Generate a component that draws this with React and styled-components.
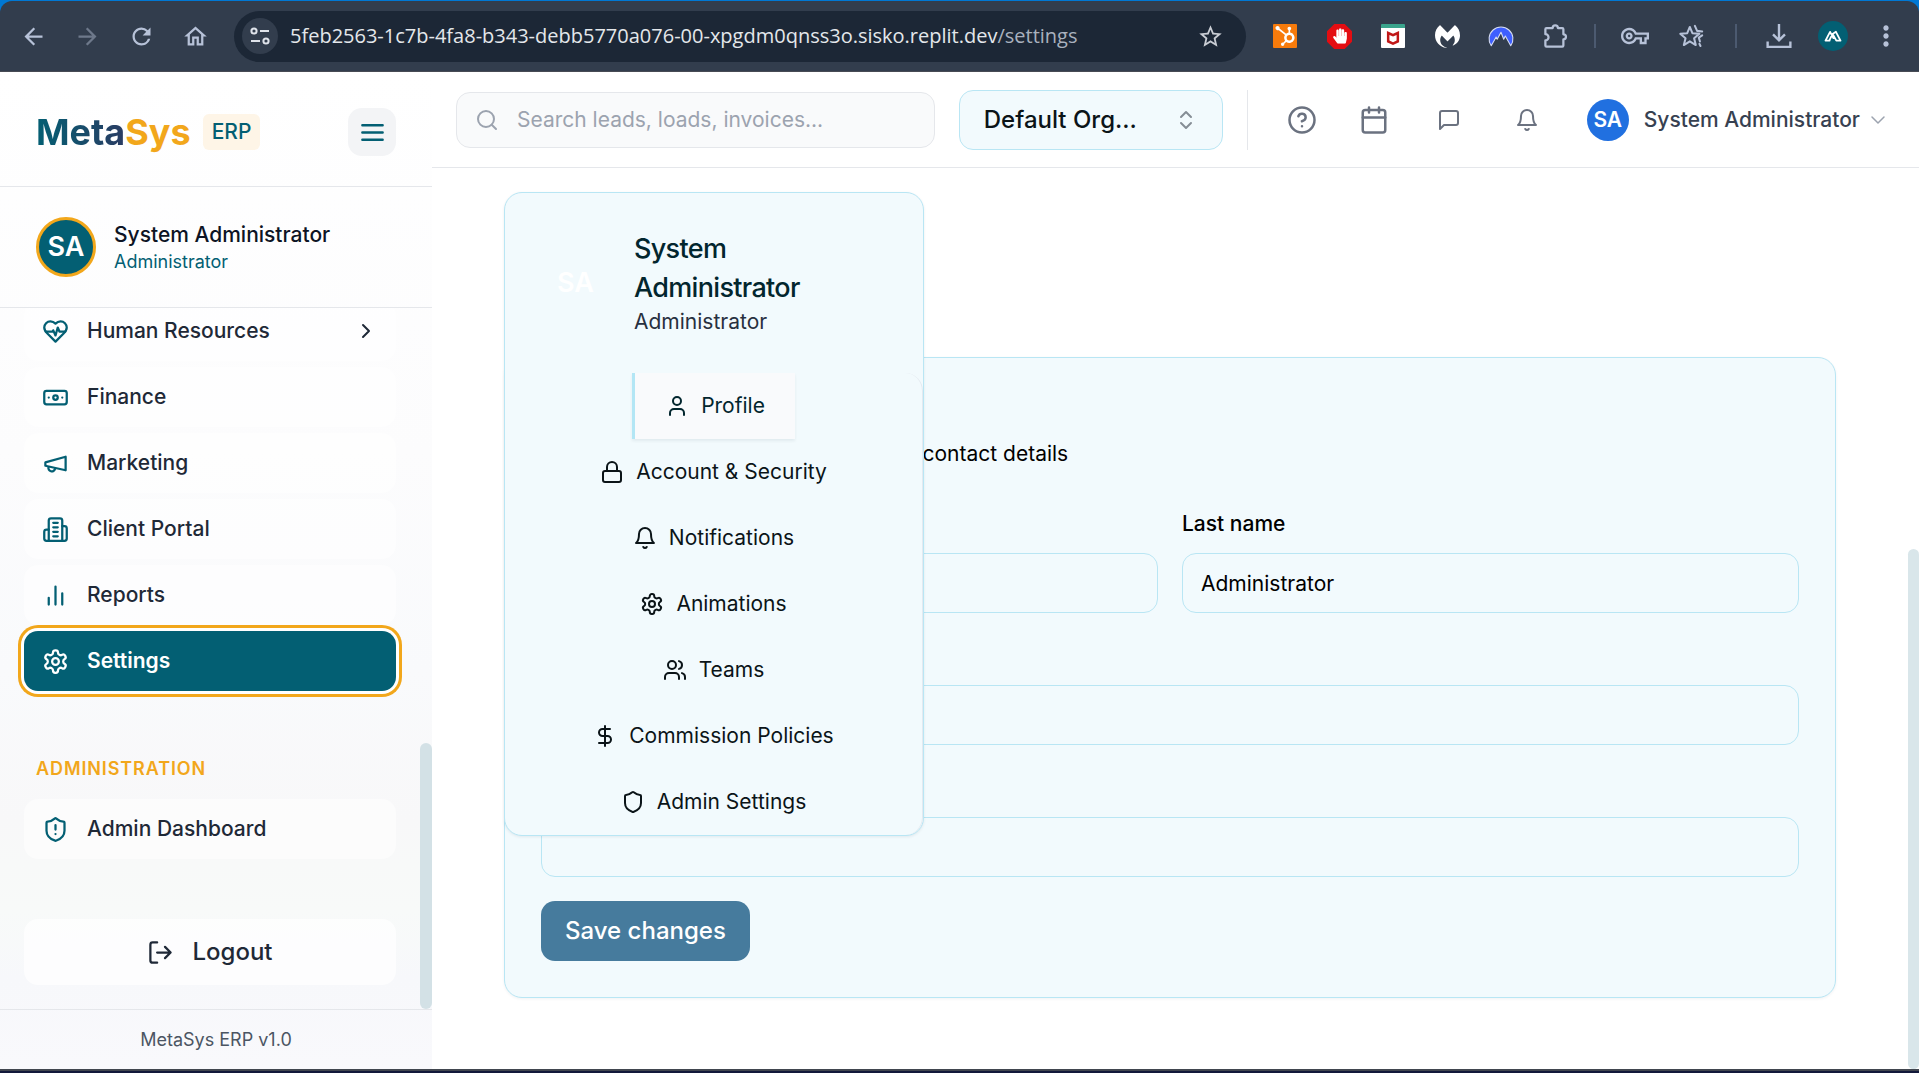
import React from "react";
import styled, { createGlobalStyle, css } from "styled-components";
import { SiHubspot, SiMcafee, SiMalwarebytes } from "react-icons/si";
import { FaHandPaper } from "react-icons/fa";
import {
  MdArrowBack, MdArrowForward, MdRefresh, MdOutlineHome, MdStarOutline,
  MdOutlineVpnKey, MdMoreVert,
} from "react-icons/md";

const teal = "#035f73";
const amber = "#f2a71b";
const line = "#e5e7eb";
const skyLine = "#b9e6f4";
const skyFill = "#f2fafd";

const Global = createGlobalStyle`
  *, *::before, *::after { box-sizing: border-box; }
  html, body, #root { height: 100%; }
  body { margin: 0; overflow: hidden; background: #fff; font-family: Inter, "Liberation Sans", sans-serif; font-size: 21px; line-height: 30px; color: #0b1418; }
  button, input { font: inherit; color: inherit; margin: 0; }
  button { border: 0; padding: 0; background: none; cursor: pointer; }
  a { color: inherit; text-decoration: none; }
  h1, h2, p, ul { margin: 0; padding: 0; font-weight: inherit; font-size: inherit; }
  ul { list-style: none; }
  svg { display: block; flex: none; }
`;

/* ---------- icons ---------- */
const Stroke = ({ size = 24, width = 2, children }) => (
  <svg width={size} height={size} viewBox="0 0 24 24" fill="none" stroke="currentColor"
    strokeWidth={width} strokeLinecap="round" strokeLinejoin="round" aria-hidden="true">{children}</svg>
);
const shapes = {
  heart: <><path d="M19 14c1.49-1.46 3-3.21 3-5.5A5.5 5.5 0 0 0 16.5 3c-1.76 0-3 .5-4.5 2-1.5-1.5-2.74-2-4.5-2A5.5 5.5 0 0 0 2 8.5c0 2.3 1.5 4.05 3 5.5l7 7Z" /><path d="M3.22 12H9.5l.5-1 2 4.5 2-7 1.5 3.5h5.27" /></>,
  banknote: <><rect x="2" y="6" width="20" height="12" rx="2" /><circle cx="12" cy="12" r="2" /><path d="M6 12h.01M18 12h.01" /></>,
  megaphone: <><path d="m3 11 18-5v12L3 14v-3z" /><path d="M11.6 16.8a3 3 0 1 1-5.8-1.6" /></>,
  building: <><path d="M6 22V4a2 2 0 0 1 2-2h8a2 2 0 0 1 2 2v18Z" /><path d="M6 12H4a2 2 0 0 0-2 2v6a2 2 0 0 0 2 2h2" /><path d="M18 9h2a2 2 0 0 1 2 2v9a2 2 0 0 1-2 2h-2" /><path d="M10 6h4M10 10h4M10 14h4M10 18h4" /></>,
  bars: <path d="M18 20V10M12 20V4M6 20v-6" />,
  gear: <><path d="M12.22 2h-.44a2 2 0 0 0-2 2v.18a2 2 0 0 1-1 1.73l-.43.25a2 2 0 0 1-2 0l-.15-.08a2 2 0 0 0-2.73.73l-.22.38a2 2 0 0 0 .73 2.73l.15.1a2 2 0 0 1 1 1.72v.51a2 2 0 0 1-1 1.74l-.15.09a2 2 0 0 0-.73 2.73l.22.38a2 2 0 0 0 2.73.73l.15-.08a2 2 0 0 1 2 0l.43.25a2 2 0 0 1 1 1.73V20a2 2 0 0 0 2 2h.44a2 2 0 0 0 2-2v-.18a2 2 0 0 1 1-1.73l.43-.25a2 2 0 0 1 2 0l.15.08a2 2 0 0 0 2.73-.73l.22-.39a2 2 0 0 0-.73-2.73l-.15-.08a2 2 0 0 1-1-1.74v-.5a2 2 0 0 1 1-1.74l.15-.09a2 2 0 0 0 .73-2.73l-.22-.38a2 2 0 0 0-2.73-.73l-.15.08a2 2 0 0 1-2 0l-.43-.25a2 2 0 0 1-1-1.73V4a2 2 0 0 0-2-2z" /><circle cx="12" cy="12" r="3" /></>,
  shield: <path d="M20 13c0 5-3.5 7.5-7.66 8.95a1 1 0 0 1-.67-.01C7.5 20.5 4 18 4 13V6a1 1 0 0 1 1-1c2 0 4.5-1.2 6.24-2.72a1.17 1.17 0 0 1 1.52 0C14.51 3.81 17 5 19 5a1 1 0 0 1 1 1z" />,
  alert: <path d="M12 8v4M12 16h.01" />,
  logout: <path d="M9 21H5a2 2 0 0 1-2-2V5a2 2 0 0 1 2-2h4M16 17l5-5-5-5M21 12H9" />,
  chevronRight: <path d="m9 18 6-6-6-6" />,
  chevronDown: <path d="m6 9 6 6 6-6" />,
  updown: <path d="m7 15 5 5 5-5M7 9l5-5 5 5" />,
  menu: <path d="M3 5.500h18M3 12h18M3 18.500h18" />,
  search: <><circle cx="11" cy="11" r="8" /><path d="m21 21-4.3-4.3" /></>,
  help: <><circle cx="12" cy="12" r="10" /><path d="M9.09 9a3 3 0 0 1 5.83 1c0 2-3 3-3 3M12 17h.01" /></>,
  calendar: <><path d="M8 2v4M16 2v4M3 10h18" /><rect x="3" y="4" width="18" height="18" rx="2" /></>,
  chat: <path d="M21 15a2 2 0 0 1-2 2H7l-4 4V5a2 2 0 0 1 2-2h14a2 2 0 0 1 2 2z" />,
  bell: <><path d="M6 8a6 6 0 0 1 12 0c0 7 3 9 3 9H3s3-2 3-9" /><path d="M10.3 21a1.94 1.94 0 0 0 3.4 0" /></>,
  user: <><path d="M19 21v-2a4 4 0 0 0-4-4H9a4 4 0 0 0-4 4v2" /><circle cx="12" cy="7" r="4" /></>,
  lock: <><rect x="3" y="11" width="18" height="11" rx="2" /><path d="M7 11V7a5 5 0 0 1 10 0v4" /></>,
  users: <><path d="M16 21v-2a4 4 0 0 0-4-4H6a4 4 0 0 0-4 4v2" /><circle cx="9" cy="7" r="4" /><path d="M22 21v-2a4 4 0 0 0-3-3.87M16 3.13a4 4 0 0 1 0 7.75" /></>,
  dollar: <path d="M12 2v20M17 5H9.5a3.5 3.5 0 0 0 0 7h5a3.5 3.5 0 0 1 0 7H6" />,
};
const Icon = ({ name, size, width }) => (
  <Stroke size={size} width={width}>{shapes[name]}{name === "shieldAlert" && <>{shapes.shield}{shapes.alert}</>}</Stroke>
);

/* ---------- browser bar ---------- */
const Window = styled.div`display: flex; flex-direction: column; height: 100vh;`;
const Frame = styled.div`flex: none; padding-top: 1px; background: #0078d4;`;
const Bar = styled.div`
  display: flex; align-items: center; height: 71px; padding: 0 7px 0 15px;
  background: #323d4d; color: #b7c2d8; border-bottom: 1px solid #474b54; border-radius: 12px 12px 0 0;
`;
const BarButton = styled.button`
  display: grid; place-items: center; flex: none; width: ${(p) => p.$w || 54}px; height: 36px;
  opacity: ${(p) => (p.$dim ? 0.45 : 1)};
`;
const NavButtons = styled.div`display: flex; margin-left: -9px; margin-right: 12px;`;
const Address = styled.div`
  display: flex; align-items: center; flex: 1; min-width: 0; height: 51px; padding: 0 22px 0 8px;
  border-radius: 26px; background: #1c2736; color: #c9cdd4;
`;
const SiteInfo = styled.button`
  display: grid; place-items: center; flex: none; width: 36px; height: 36px; border-radius: 50%;
  background: #323d4d; color: #dfe3ea; margin-right: 12px;
`;
const Url = styled.span`
  flex: 1; min-width: 0; overflow: hidden; white-space: nowrap; font-family: "Open Sans", "Noto Sans", sans-serif;
  font-size: 20px; color: #a9b1be;
  b { font-weight: 400; color: #e4e7eb; }
`;
const Extensions = styled.div`display: flex; align-items: center; margin-left: 12px;`;
const Rule = styled.span`width: 2px; height: 24px; margin: 0 ${(p) => p.$gap}px; background: #4c5a70;`;
const Tile = styled.span`
  display: grid; place-items: center; width: 24px; height: 24px; color: ${(p) => p.$fg}; background: ${(p) => p.$bg};
  border-radius: 1px; border-top: ${(p) => (p.$top ? `4px solid ${p.$top}` : "0")};
`;
const Profile = styled.span`
  display: grid; place-items: center; width: 30px; height: 30px; border-radius: 50%; background: ${teal}; color: #fff;
`;

/* ---------- shell ---------- */
const Shell = styled.div`display: flex; flex: 1; min-height: 0;`;
const Taskbar = styled.div`flex: none; height: 4px; background: #12183a; border-top: 2px solid #41464f;`;
const Side = styled.aside`
  display: flex; flex-direction: column; flex: none; width: 432px;
  background: linear-gradient(#fff 0%, #fcfcfd 38%, #f9fafc 60%, #f8f8f9 75%, #f8faf9 84%, #f7f8fb 91%, #f9f9fc 100%);
`;
const Brand = styled.div`
  display: flex; align-items: center; flex: none; height: 115px; padding: 6px 36px 0; border-bottom: 1px solid ${line};
`;
const Logo = styled.h1`
  font-size: 36px; line-height: 42px; font-weight: 700; color: ${amber};
  span { background: linear-gradient(90deg, ${teal}, #2a3c63); background-clip: text; -webkit-background-clip: text; color: transparent; }
`;
const Badge = styled.span`
  margin-left: 12px; padding: 3px 9px; border-radius: 6px; background: #fef5e7; color: ${teal}; font-size: 21px; font-weight: 500;
`;
const MenuButton = styled.button`
  display: grid; place-items: center; width: 48px; height: 48px; margin-left: auto; border-radius: 14px;
  background: #f3f4f6; color: ${teal};
`;
const Person = styled.div`
  display: flex; align-items: center; gap: 18px; flex: none; height: 121px; padding: 0 36px; border-bottom: 1px solid ${line};
`;
const Avatar = styled.span`
  display: grid; place-items: center; flex: none; width: ${(p) => p.$size}px; height: ${(p) => p.$size}px; border-radius: 50%;
  background: ${(p) => p.$bg}; border: ${(p) => (p.$ring ? `3px solid ${amber}` : "0")};
  color: #fff; font-size: ${(p) => p.$font}px; font-weight: 600;
`;
const PersonName = styled.p`font-weight: 500; color: #0d1424;`;
const PersonRole = styled.p`font-size: 18px; line-height: 24px; color: ${teal};`;
const SideScroll = styled.div`position: relative; flex: 1; min-height: 0; overflow: hidden; padding: 0 36px 0 24px; display: flex; flex-direction: column; justify-content: flex-end;`;
const Thumb = styled.span`
  position: absolute; right: 0; bottom: 0; width: ${(p) => p.$w}px; height: ${(p) => p.$h}px; border-radius: 6px; background: ${(p) => p.$c};
`;
const NavList = styled.ul`display: flex; flex-direction: column; gap: 6px;`;
const NavLink = styled.a`
  display: flex; align-items: center; gap: 18px; flex: none; height: 60px; padding: 0 18px; border-radius: 14px;
  background: rgba(255, 255, 255, 0.5); color: #1f2937; font-weight: 500;
  svg { color: ${teal}; }
  svg + span { flex: 1; }
  span + svg { color: #1f2937; }
  ${(p) => p.$active && css`
    background: ${teal}; color: #fff; font-weight: 600; box-shadow: 0 0 0 3px #fff, 0 0 0 6px ${amber};
    svg { color: #fff; }
  `}
`;
const Section = styled.h2`
  margin: 63px 12px 15px; font-size: 18px; font-weight: 600; letter-spacing: 0.05em; color: ${amber};
`;
const Logout = styled.button`
  display: flex; align-items: center; justify-content: center; gap: 18px; flex: none; height: 66px; margin: 60px 0 24px;
  border-radius: 14px; background: rgba(255, 255, 255, 0.7); color: #1f2937; font-size: 24px; font-weight: 500;
`;
const Version = styled.footer`
  flex: none; height: 60px; padding: 15px; border-top: 1px solid ${line}; text-align: center; font-size: 18px; color: #4b5563;
`;

/* ---------- top bar ---------- */
const Main = styled.main`display: flex; flex-direction: column; flex: 1; min-width: 0;`;
const Top = styled.header`
  display: flex; align-items: center; flex: none; height: 96px; padding: 0 29px 0 24px; border-bottom: 1px solid ${line};
`;
const Search = styled.label`
  display: flex; align-items: center; gap: 18px; flex: 1; min-width: 0; height: 56px; padding: 0 18px;
  border: 1px solid ${line}; border-radius: 14px; background: #f9fafb; color: #9ca3af;
  input { flex: 1; min-width: 0; border: 0; outline: 0; background: none; padding: 0; }
  input::placeholder { color: #9ca3af; opacity: 1; }
`;
const OrgSwitch = styled.button`
  display: flex; align-items: center; justify-content: space-between; flex: none; width: 264px; height: 60px; margin-left: 24px;
  padding: 0 24px; border: 1px solid ${skyLine}; border-radius: 14px; background: ${skyFill}; font-size: 24px; font-weight: 500;
  svg { color: #858d95; }
`;
const TopRule = styled.span`flex: none; width: 1px; height: 60px; margin: 0 18px 0 24px; background: ${line};`;
const TopButton = styled.button`
  display: grid; place-items: center; flex: none; width: ${(p) => p.$w}px; height: 48px; color: #6b7280;
`;
const Account = styled.button`
  display: flex; align-items: center; flex: none; margin-left: 21px; font-weight: 500; color: #374151;
  span + span { margin: 0 6px 0 15px; }
  svg { color: #9ca3af; }
`;

/* ---------- settings page ---------- */
const Page = styled.div`position: relative; flex: 1; min-height: 0; padding: 189px 83px 0 72px; overflow: hidden;`;
const Card = styled.form`
  display: flex; flex-direction: column; gap: 24px; padding: 36px; border: 1px solid ${skyLine}; border-radius: 18px; background: ${skyFill};
  box-shadow: 0 1px 3px rgba(0, 40, 60, 0.06);
`;
const CardHead = styled.div`padding: 45px 0 12px; color: #000;`;
const Columns = styled.div`display: grid; grid-template-columns: 1fr 1fr; gap: 24px;`;
const Field = styled.div`
  display: flex; flex-direction: column; gap: 10px; color: #000;
  label { line-height: 38px; font-weight: 500; }
  input { width: 100%; height: 60px; padding: 0 18px; border: 1px solid ${skyLine}; border-radius: 14px; background: transparent; outline: 0; }
`;
const Save = styled.button`
  align-self: flex-start; height: 60px; padding: 0 24px; border-radius: 14px; background: #467b9d; color: #fff; font-size: 24px; font-weight: 500;
`;
const Panel = styled.section`
  position: absolute; left: 72px; top: 24px; width: 420px; padding-top: 36px; border: 1px solid ${skyLine}; border-radius: 18px;
  background: ${skyFill}; box-shadow: 0 1px 3px rgba(0, 40, 60, 0.08);
`;
const PanelHead = styled.div`
  display: flex; align-items: center; gap: 24px; padding: 0 36px; margin-bottom: 36px;
  h2 { font-size: 27px; line-height: 39px; font-weight: 500; letter-spacing: -0.025em; color: #02262e; }
  p { color: #283040; }
`;
const Tabs = styled.div`
  display: flex; flex-direction: column; align-items: center;
  border-right: 1px solid #e3e9f0; border-radius: 18px;
`;
const Tab = styled.button`
  display: flex; align-items: center; gap: 12px; height: 66px; padding: 0 30px;
  ${(p) => p.$active && css`
    border-left: 3px solid #b3e6f5; background: #f9fafc; color: #02262e; box-shadow: 0 2px 3px rgba(0, 40, 60, 0.07);
  `}
`;

const links = [
  ["heart", "Human Resources"], ["banknote", "Finance"], ["megaphone", "Marketing"],
  ["building", "Client Portal"], ["bars", "Reports"], ["gear", "Settings"],
];
const tabs = [
  ["user", "Profile"], ["lock", "Account & Security"], ["bell", "Notifications"], ["gear", "Animations"],
  ["users", "Teams"], ["dollar", "Commission Policies"], ["shield", "Admin Settings"],
];

function BrowserBar() {
  return (
    <Frame>
      <Bar>
        <NavButtons>
          <BarButton aria-label="Back"><MdArrowBack size={27} /></BarButton>
          <BarButton aria-label="Forward" $dim><MdArrowForward size={27} /></BarButton>
          <BarButton aria-label="Reload"><MdRefresh size={27} /></BarButton>
          <BarButton aria-label="Home"><MdOutlineHome size={27} /></BarButton>
        </NavButtons>
        <Address>
          <SiteInfo aria-label="Site information">
            <svg width="20" height="20" viewBox="0 0 20 20" fill="none" stroke="currentColor" strokeWidth="2">
              <circle cx="4" cy="5" r="2.6" /><path d="M10 5h9M1 15h9" /><circle cx="16" cy="15" r="2.6" />
            </svg>
          </SiteInfo>
          <Url><b>5feb2563-1c7b-4fa8-b343-debb5770a076-00-xpgdm0qnss3o.sisko.replit.dev</b>/settings</Url>
          <MdStarOutline size={27} />
        </Address>
        <Extensions>
          <BarButton aria-label="HubSpot"><Tile $bg="#f77b0b" $fg="#fff"><SiHubspot size={20} /></Tile></BarButton>
          <BarButton aria-label="AdBlock">
            <svg width="25" height="25" viewBox="0 0 24 24">
              <path d="M7 0h10l7 7v10l-7 7H7l-7-7V7z" fill="#e40d12" />
              <g transform="translate(5 4)" color="#fff"><FaHandPaper size={15} /></g>
            </svg>
          </BarButton>
          <BarButton aria-label="McAfee"><Tile $bg="#fff" $fg="#c01818" $top="#3aa48c"><SiMcafee size={14} /></Tile></BarButton>
          <BarButton aria-label="Malwarebytes"><Tile $fg="#fff"><SiMalwarebytes size={25} /></Tile></BarButton>
          <BarButton aria-label="NordVPN">
            <svg width="26" height="26" viewBox="0 0 24 24">
              <path d="M3 21A11 11 0 1 1 21 21L16 12l-1.500 3L12 8.500 8.500 15 7.500 13z" fill="#3e5fff" stroke="#d5dcf2" strokeWidth="1" strokeLinejoin="round" />
            </svg>
          </BarButton>
          <BarButton aria-label="Extensions">
            <Stroke size={27} width={2}><path d="M4 4.500h5.500a2.300 2.300 0 0 1 4.600 0H18a1 1 0 0 1 1 1V10a2.300 2.300 0 0 1 0 4.600V20a1 1 0 0 1-1 1H4a1 1 0 0 1-1-1v-4.500a2.800 2.800 0 0 0 0-5.600V5.500a1 1 0 0 1 1-1z" /></Stroke>
          </BarButton>
          <Rule $gap={12} />
          <BarButton aria-label="Passwords"><MdOutlineVpnKey size={28} /></BarButton>
          <BarButton aria-label="Bookmarks" $w={58}>
            <Stroke size={27} width={1.8}><path d="m10.500 3.500 2.300 5.600 6.200.5-4.700 4 1.500 6-5.300-3.300L5.200 19.600l1.500-6-4.700-4 6.200-.5zM15 2.500l2 4.500 4.500.5M18.500 13l1 3.500M20 20.500l-1-2M21.500 11 18.500 13" /></Stroke>
          </BarButton>
          <Rule $gap={15} />
          <BarButton aria-label="Downloads">
            <svg width="26" height="26" viewBox="0 0 24 24" fill="none" stroke="currentColor" strokeWidth="2.200">
              <path d="M12 1v15M6.500 10.500 12 16l5.500-5.500M1.500 17v5h21v-5" />
            </svg>
          </BarButton>
          <BarButton aria-label="Browser profile">
            <Profile><Stroke size={20} width={2.2}><path d="M8 17.500H3L8.500 7l4 7.500M11.500 9.500 15.500 7 21 17.500h-5L11.500 9.500 7.500 17.500" /></Stroke></Profile>
          </BarButton>
          <BarButton aria-label="More" $w={52}><MdMoreVert size={32} /></BarButton>
        </Extensions>
      </Bar>
    </Frame>
  );
}

function Sidebar() {
  return (
    <Side>
      <Brand>
        <Logo><span>Meta</span>Sys</Logo>
        <Badge>ERP</Badge>
        <MenuButton aria-label="Toggle menu"><Icon name="menu" size={27} width={2.2} /></MenuButton>
      </Brand>
      <Person>
        <Avatar $size={60} $font={27} $bg={teal} $ring>SA</Avatar>
        <div><PersonName>System Administrator</PersonName><PersonRole>Administrator</PersonRole></div>
      </Person>
      <SideScroll>
        <NavList>
          {links.map(([icon, label]) => (
            <li key={label}>
              <NavLink href="#" $active={label === "Settings"}>
                <Icon name={icon} size={27} /><span>{label}</span>
                {label === "Human Resources" && <Icon name="chevronRight" />}
              </NavLink>
            </li>
          ))}
        </NavList>
        <Section>ADMINISTRATION</Section>
        <NavLink href="#"><Icon name="shieldAlert" size={27} /><span>Admin Dashboard</span></NavLink>
        <Logout><Icon name="logout" size={27} />Logout</Logout>
        <Thumb $w={12} $h={266} $c="#d3e1e6" />
      </SideScroll>
      <Version>MetaSys ERP v1.0</Version>
    </Side>
  );
}

function TopBar() {
  return (
    <Top>
      <Search>
        <Icon name="search" size={24} />
        <input type="search" aria-label="Search" placeholder="Search leads, loads, invoices..." />
      </Search>
      <OrgSwitch>Default Org...<Icon name="updown" size={24} /></OrgSwitch>
      <TopRule />
      <TopButton $w={72} aria-label="Help"><Icon name="help" size={30} /></TopButton>
      <TopButton $w={72} aria-label="Calendar"><Icon name="calendar" size={30} /></TopButton>
      <TopButton $w={78} aria-label="Messages"><Icon name="chat" /></TopButton>
      <TopButton $w={78} aria-label="Notifications"><Icon name="bell" /></TopButton>
      <Account>
        <Avatar $size={42} $font={21} $bg="#2170e0">SA</Avatar>
        <span>System Administrator</span>
        <Icon name="chevronDown" size={24} width={1.5} />
      </Account>
    </Top>
  );
}

const TextField = ({ id, label, value = "", type = "text" }) => (
  <Field><label htmlFor={id}>{label}</label><input id={id} type={type} defaultValue={value} /></Field>
);

export default function App() {
  return (
    <Window>
      <Global />
      <BrowserBar />
      <Shell>
        <Sidebar />
        <Main>
          <TopBar />
          <Page>
            <Card>
              <CardHead>
                <p>Update your personal information and contact details</p>
              </CardHead>
              <Columns>
                <TextField id="first" label="First name" value="System" />
                <TextField id="last" label="Last name" value="Administrator" />
              </Columns>
              <TextField id="email" label="Email" type="email" />
              <TextField id="phone" label="Phone" type="tel" />
              <Save type="button">Save changes</Save>
            </Card>
            <Panel>
              <PanelHead>
                <Avatar $size={69} $font={27} $bg="transparent">SA</Avatar>
                <div><h2>System Administrator</h2><p>Administrator</p></div>
              </PanelHead>
              <Tabs role="tablist">
                {tabs.map(([icon, label], i) => (
                  <Tab key={label} role="tab" aria-selected={i === 0} $active={i === 0}>
                    <Icon name={icon} />{label}
                  </Tab>
                ))}
              </Tabs>
            </Panel>
            <Thumb $w={11} $h={520} $c="#d9e6ea" />
          </Page>
        </Main>
      </Shell>
      <Taskbar />
    </Window>
  );
}
